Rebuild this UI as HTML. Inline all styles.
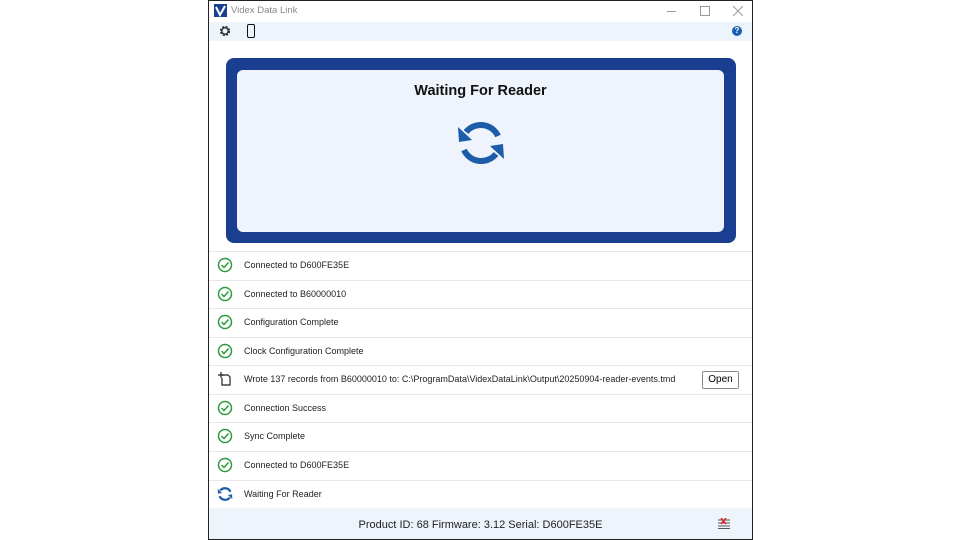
<!DOCTYPE html>
<html><head><meta charset="utf-8"><style>
body{margin:0;width:960px;height:540px;background:#fff;position:relative;font-family:"Liberation Sans",sans-serif;overflow:hidden}
.win{position:absolute;left:208px;top:0;width:543px;height:538px;border:1px solid #222;background:#fff}
.title{position:absolute;left:0;top:0;width:543px;height:21px}
.title span{position:absolute;left:22px;top:4px;font-size:9.5px;color:#888}
.tool{position:absolute;left:0;top:21px;width:543px;height:19px;background:#eef4fc}
.panel{position:absolute;left:17px;top:57px;width:510px;height:185px;background:#1a3f91;border-radius:8px}
.inner{position:absolute;left:11px;top:12px;width:487px;height:162px;background:#eef3fc;border-radius:6px}
.inner h1{margin:0;position:absolute;top:13px;width:100%;text-align:center;font-size:14.5px;font-weight:bold;color:#111}
.row{position:absolute;left:0;width:543px;height:28px;border-top:1px solid #e8e8e8}
.row .t{position:absolute;left:35px;top:8px;font-size:9px;color:#222;white-space:nowrap}
.row svg{position:absolute;left:8px;top:5px}
.foot{position:absolute;left:0;top:507px;width:543px;height:31px;background:#eef4fc}
.foot span{position:absolute;left:0;width:100%;text-align:center;top:11px;font-size:11px;color:#222}
.open{position:absolute;left:493px;top:5px;width:35px;height:16px;border:1px solid #888;border-radius:2px;font-size:10px;text-align:center;line-height:16px;background:#fff}
</style></head><body>
<div class="win">
 <div class="title">
  <svg style="position:absolute;left:5px;top:3px" width="13" height="13"><rect width="13" height="13" fill="#1a3f91"/><path d="M2 3 L6 11 L11 2" stroke="#fff" stroke-width="2" fill="none"/></svg>
  <span>Videx Data Link</span>
  <div style="position:absolute;left:458px;top:10px;width:9px;height:1px;background:#999"></div>
  <div style="position:absolute;left:491px;top:5px;width:8px;height:8px;border:1px solid #999"></div>
  <svg style="position:absolute;left:524px;top:5px" width="10" height="10"><path d="M0 0L10 10M10 0L0 10" stroke="#999"/></svg>
 </div>
 <div class="tool">
  <svg style="position:absolute;left:10px;top:3px" width="12" height="12" viewBox="0 0 12 12"><circle cx="6" cy="6" r="4" fill="none" stroke="#333" stroke-width="2.2" stroke-dasharray="2 1.2"/><circle cx="6" cy="6" r="3.2" fill="none" stroke="#333" stroke-width="1.4"/></svg>
  <div style="position:absolute;left:38px;top:2px;width:6px;height:12px;border:1.6px solid #111;border-radius:2px"></div>
  <div style="position:absolute;left:523px;top:4px;width:10px;height:10px;border-radius:50%;background:#1a5fb4;color:#fff;font-size:8px;font-weight:bold;text-align:center;line-height:10px">?</div>
 </div>
 <div class="panel"><div class="inner"><h1>Waiting For Reader</h1>
  <svg style="position:absolute;left:219px;top:48px" width="50" height="50" viewBox="0 0 50 50">
   <path d="M42 18 A19 19 0 0 0 10 14" stroke="#1d5ca8" stroke-width="6" fill="none"/>
   <path d="M2 9 L16 22 L3 24 Z" fill="#1d5ca8"/>
   <path d="M8 32 A19 19 0 0 0 40 36" stroke="#1d5ca8" stroke-width="6" fill="none"/>
   <path d="M48 41 L34 28 L47 26 Z" fill="#1d5ca8"/>
  </svg>
 </div></div>
 <div class="row" style="top:250px"><svg width="16" height="16"><circle cx="8" cy="8" r="6.5" fill="none" stroke="#2e9a3e" stroke-width="1.5"/><path d="M4.5 8 L7 10.5 L11.5 5.5" stroke="#2e9a3e" stroke-width="1.5" fill="none"/></svg><span class="t">Connected to D600FE35E</span></div>
 <div class="row" style="top:279px"><svg width="16" height="16"><circle cx="8" cy="8" r="6.5" fill="none" stroke="#2e9a3e" stroke-width="1.5"/><path d="M4.5 8 L7 10.5 L11.5 5.5" stroke="#2e9a3e" stroke-width="1.5" fill="none"/></svg><span class="t">Connected to B60000010</span></div>
 <div class="row" style="top:307px"><svg width="16" height="16"><circle cx="8" cy="8" r="6.5" fill="none" stroke="#2e9a3e" stroke-width="1.5"/><path d="M4.5 8 L7 10.5 L11.5 5.5" stroke="#2e9a3e" stroke-width="1.5" fill="none"/></svg><span class="t">Configuration Complete</span></div>
 <div class="row" style="top:336px"><svg width="16" height="16"><circle cx="8" cy="8" r="6.5" fill="none" stroke="#2e9a3e" stroke-width="1.5"/><path d="M4.5 8 L7 10.5 L11.5 5.5" stroke="#2e9a3e" stroke-width="1.5" fill="none"/></svg><span class="t">Clock Configuration Complete</span></div>
 <div class="row" style="top:364px"><svg width="16" height="16"><path d="M5 4 H11 L13 6 V14 H5 V7" stroke="#222" stroke-width="1.2" fill="none"/><path d="M1 4 H7 M4 1 V7" stroke="#222" stroke-width="1.2"/></svg><span class="t">Wrote 137 records from B60000010 to: C:\ProgramData\VidexDataLink\Output\20250904-reader-events.tmd</span><div class="open">Open</div></div>
 <div class="row" style="top:393px"><svg width="16" height="16"><circle cx="8" cy="8" r="6.5" fill="none" stroke="#2e9a3e" stroke-width="1.5"/><path d="M4.5 8 L7 10.5 L11.5 5.5" stroke="#2e9a3e" stroke-width="1.5" fill="none"/></svg><span class="t">Connection Success</span></div>
 <div class="row" style="top:421px"><svg width="16" height="16"><circle cx="8" cy="8" r="6.5" fill="none" stroke="#2e9a3e" stroke-width="1.5"/><path d="M4.5 8 L7 10.5 L11.5 5.5" stroke="#2e9a3e" stroke-width="1.5" fill="none"/></svg><span class="t">Sync Complete</span></div>
 <div class="row" style="top:450px"><svg width="16" height="16"><circle cx="8" cy="8" r="6.5" fill="none" stroke="#2e9a3e" stroke-width="1.5"/><path d="M4.5 8 L7 10.5 L11.5 5.5" stroke="#2e9a3e" stroke-width="1.5" fill="none"/></svg><span class="t">Connected to D600FE35E</span></div>
 <div class="row" style="top:479px"><svg width="16" height="16" viewBox="0 0 50 50"><path d="M42 18 A19 19 0 0 0 10 14" stroke="#1d5ca8" stroke-width="7" fill="none"/><path d="M2 9 L16 22 L3 24 Z" fill="#1d5ca8"/><path d="M8 32 A19 19 0 0 0 40 36" stroke="#1d5ca8" stroke-width="7" fill="none"/><path d="M48 41 L34 28 L47 26 Z" fill="#1d5ca8"/></svg><span class="t">Waiting For Reader</span></div>
 <div class="foot"><span>Product ID: 68 Firmware: 3.12 Serial: D600FE35E</span>
  <svg style="position:absolute;left:509px;top:10px" width="12" height="11"><path d="M0 2H12M0 5H12M0 8H12M0 10.5H12" stroke="#555"/><path d="M3 0L8 6M8 0L3 6" stroke="#d22" stroke-width="1.5"/></svg>
 </div>
</div>
</body></html>
